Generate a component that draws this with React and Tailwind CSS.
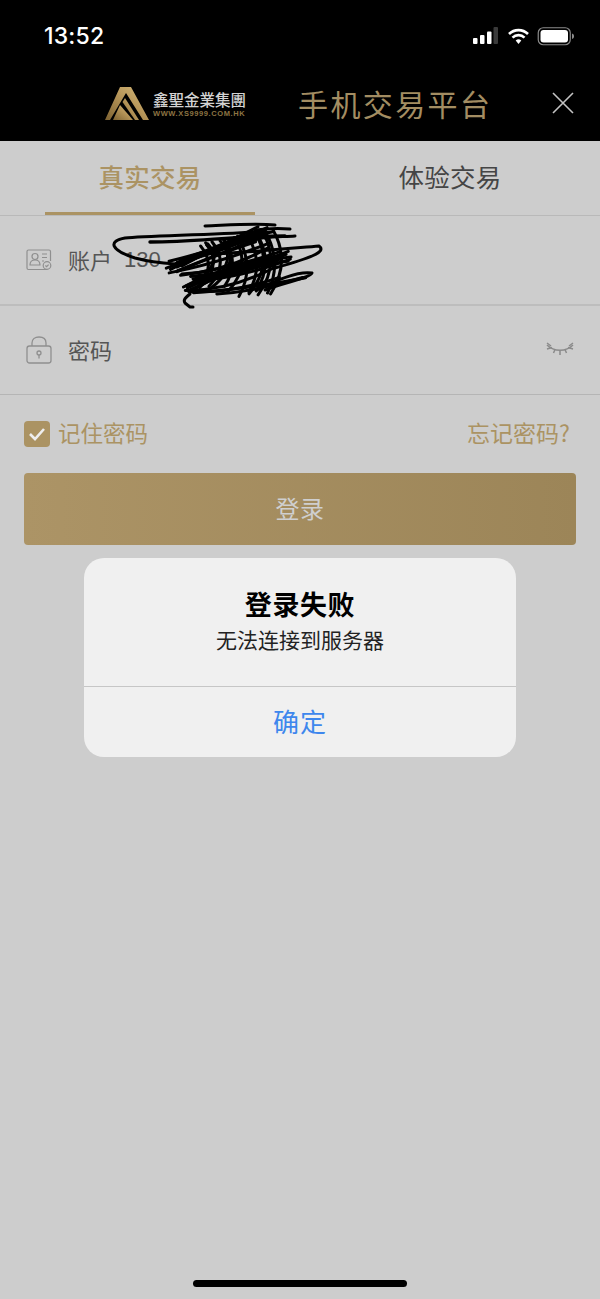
const cjk = { fontFamily: '"Noto Sans CJK SC", "Noto Sans", sans-serif' }

// dense pen scrawl, rows of uneven strokes across the blob
const wobble = (n) => Math.sin(n * 12.9898) * 43758.5453 % 1
const scrawl = []
for (let i = 0; i < 30; i++) {
  const t = i / 29
  const x0 = 62 + 36 * t + wobble(i + 1) * 14
  const y0 = 42 + 34 * t
  const x1 = 152 + 34 * t + wobble(i + 2) * 16
  const y1 = 6 + 52 * t + wobble(i + 3) * 5
  const bend = wobble(i + 4) * 12
  scrawl.push(`M${x0} ${y0} Q${(x0 + x1) / 2} ${(y0 + y1) / 2 + bend} ${x1} ${y1}`)
}
for (let i = 0; i < 16; i++) {
  const t = i / 15
  const x0 = 92 + 70 * t + wobble(i + 5) * 8
  const y0 = 28 - 16 * t
  const x1 = 84 + 76 * t + wobble(i + 6) * 10
  const y1 = 70 + wobble(i + 7) * 9
  scrawl.push(`M${x0} ${y0} Q${x0 + 18} ${(y0 + y1) / 2} ${x1} ${y1}`)
}

function StatusIcons() {
  return (
    <div className="flex items-center">
      <svg width="25" height="18" viewBox="0 0 25 18">
        <rect x="0" y="11" width="4.5" height="6" rx="1" fill="#fff" />
        <rect x="7" y="8" width="4.5" height="9" rx="1" fill="#fff" />
        <rect x="14" y="4.5" width="4.5" height="12.5" rx="1" fill="#fff" />
        <rect x="20.5" y="0" width="4.5" height="17" rx="1" fill="#3a3a3a" />
      </svg>
      <svg width="23" height="17" viewBox="0 0 22 17" className="ml-[9px]">
        <path d="M1.5 6 A13.5 13.5 0 0 1 20.5 6" fill="none" stroke="#fff" strokeWidth="2.6" />
        <path d="M5 9.6 A8.5 8.5 0 0 1 17 9.6" fill="none" stroke="#fff" strokeWidth="2.6" />
        <path d="M8.2 12.6 A4 4 0 0 1 13.8 12.6 L11 16 Z" fill="#fff" />
      </svg>
      <svg width="38" height="19" viewBox="0 0 37 19" className="ml-[7px]">
        <rect x="0.75" y="0.75" width="32" height="17" rx="5" fill="none" stroke="#8a8a8a" strokeWidth="1.2" />
        <rect x="3" y="3" width="27.5" height="12.5" rx="3" fill="#fff" />
        <path d="M34.5 6.5 C36 7 36.5 8 36.5 9.25 C36.5 10.5 36 11.5 34.5 12 Z" fill="#8a8a8a" />
      </svg>
    </div>
  )
}

function Logo() {
  return (
    <svg width="44" height="33" viewBox="0 0 44 33" className="shrink-0">
      <defs>
        <linearGradient id="logoGold" x1="0" y1="1" x2="1" y2="0">
          <stop offset="0" stopColor="#7d6231" />
          <stop offset="0.55" stopColor="#b8975a" />
          <stop offset="1" stopColor="#d6bb7c" />
        </linearGradient>
      </defs>
      <path d="M15 0 H26 L44 33 H38 L21 6 L5 33 H0 Z" fill="url(#logoGold)" />
      <path d="M20 11 L34 33 H30 L17.5 15 Z" fill="url(#logoGold)" />
      <path d="M15 18 L28 33 H8 Z" fill="url(#logoGold)" />
    </svg>
  )
}

function Scribble() {
  return (
    <svg
      width="240"
      height="100"
      viewBox="0 0 240 100"
      className="absolute left-[105px] top-[218px]"
      fill="none"
      stroke="#000"
      strokeWidth="3"
      strokeLinecap="round"
      strokeLinejoin="round"
    >
      <path d="M150 14 C100 17 40 18 20 20 C3 23 5 32 30 40 C45 44 55 45 70 46" />
      <path d="M45 24 C90 24 130 18 180 18" strokeWidth="3.4" />
      <path d="M110 36 C150 34 190 30 214 28 C222 34 205 40 170 50" />
      <path d="M100 8 C125 7 150 5 170 7 M150 12 C165 10 175 10 185 11 M160 20 C170 18 180 19 190 18" />
      <path d="M160 72 C180 64 205 60 207 55 C195 53 175 60 152 72" />
      <path d="M85 76 C80 80 78 82 80 85 L85 89 L88 89" />
      {scrawl.map((d, i) => (
        <path key={i} d={d} />
      ))}
    </svg>
  )
}

export default function App() {
  return (
    <div className="relative w-[600px] h-[1299px] overflow-hidden bg-[#cdcdcd]" style={cjk}>
      {/* top bar */}
      <div className="h-[141px] bg-black flex flex-col">
        <div className="h-[72px] pl-[44px] pr-[25px] flex items-center justify-between">
          <span className="text-white text-[23px] font-medium font-['Inter'] tracking-[0.2px]">13:52</span>
          <StatusIcons />
        </div>
        <div className="relative flex items-center pl-[105px] h-[62px]">
          <Logo />
          <div className="ml-[4px] flex flex-col w-[94px]">
            <span className="text-[#d3d3d3] text-[15.5px] leading-[20px] font-medium whitespace-nowrap">鑫聖金業集團</span>
            <span className="text-[#8d7443] text-[7.5px] leading-[9px] font-['Liberation_Sans'] font-bold tracking-[0.6px] whitespace-nowrap">WWW.XS9999.COM.HK</span>
          </div>
          <span className="ml-[51px] text-[#a38d62] text-[30px] leading-none tracking-[2.4px] whitespace-nowrap">手机交易平台</span>
          <svg width="24" height="24" viewBox="0 0 24 24" className="ml-[59px] shrink-0" stroke="#c4c4c4" strokeWidth="1.6" fill="none">
            <path d="M2 2 L22 22 M22 2 L2 22" />
          </svg>
        </div>
      </div>

      {/* tabs */}
      <div className="flex h-[75px] border-b border-[#b9b9b9]">
        <div className="w-[300px] flex justify-center">
          <div className="w-[210px] h-[74px] flex items-center justify-center border-b-[3px] border-[#ab9363]">
            <span className="text-[#ab9363] text-[25.5px] font-medium tracking-[0.2px]">真实交易</span>
          </div>
        </div>
        <div className="w-[300px] flex items-center justify-center pb-[3px]">
          <span className="text-[#454545] text-[25.5px] tracking-[0.2px]">体验交易</span>
        </div>
      </div>

      {/* account */}
      <div className="h-[90px] flex items-center pl-[26px] border-b-2 border-[#bdbdbd]">
        <svg width="26" height="22" viewBox="0 0 26 22" fill="none" stroke="#8f8f8f" strokeWidth="1.2">
          <path d="M21 20.5 H2.5 A1.5 1.5 0 0 1 1 19 V2.5 A1.5 1.5 0 0 1 2.5 1 H23 A1.5 1.5 0 0 1 24.5 2.5 V12" />
          <circle cx="9" cy="7.5" r="3" />
          <path d="M4 16 C4 12 6 11 9 11 C12 11 14 12 14 16 Z" />
          <path d="M16 5 H21 M16 8.5 H21 M16 12 H18" />
          <circle cx="21" cy="16.5" r="3.8" />
          <path d="M19.4 16.5 L20.6 17.7 L22.6 15.6" />
        </svg>
        <span className="ml-[16px] mb-[2px] text-[#555] text-[22px] whitespace-nowrap">账户</span>
        <span className="ml-[12px] mb-[2px] text-[#555] text-[22px] font-['Liberation_Sans']">130</span>
      </div>

      {/* password */}
      <div className="h-[89px] flex items-center pl-[26px] pr-[26px] border-b border-[#b5b5b5]">
        <svg width="26" height="28" viewBox="0 0 26 28" fill="none" stroke="#8f8f8f" strokeWidth="1.3">
          <path d="M6 10 V7 C6 3 9 1 13 1 C17 1 20 3 20 7 V10" />
          <rect x="1" y="10" width="24" height="17" rx="2.5" />
          <circle cx="13" cy="17" r="2" />
          <path d="M13 19 V22.5" />
        </svg>
        <span className="ml-[16px] mb-[2px] text-[#555] text-[22px]">密码</span>
        <svg width="28" height="16" viewBox="0 0 28 16" className="ml-auto" fill="none" stroke="#8b8b8b" strokeWidth="1.5">
          <path d="M1 3 C8 10 20 10 27 3" />
          <path d="M1 1 L5 4 M1 7 L6 5.5 M9 7.5 L7.5 11 M14 8.5 V13 M19 7.5 L20.5 11 M22 5.5 L27 7 M23 4 L27 1" />
        </svg>
      </div>

      {/* remember row */}
      <div className="h-[78px] flex items-center justify-between pl-[24px] pr-[30px]">
        <div className="flex items-center">
          <div className="w-[26px] h-[26px] rounded-[4px] bg-[#ab9363] flex items-center justify-center">
            <svg width="18" height="14" viewBox="0 0 18 14" fill="none" stroke="#eee" strokeWidth="2.6">
              <path d="M2 7 L7 12 L16 2" />
            </svg>
          </div>
          <span className="ml-[8px] mb-[3px] text-[#ab9363] text-[22.5px]">记住密码</span>
        </div>
        <span className="mb-[3px] text-[#ab9363] text-[23px]">忘记密码?</span>
      </div>

      {/* login */}
      <div className="px-[24px]">
        <div className="h-[72px] rounded-[4px] bg-gradient-to-r from-[#ac9466] to-[#9c8558] flex items-center justify-center">
          <span className="mb-[2px] text-[#cfcfcf] text-[24px] tracking-[0.5px]">登录</span>
        </div>
      </div>

      <Scribble />

      {/* home indicator */}
      <div className="absolute left-[193px] top-[1280px] w-[214px] h-[7px] rounded-full bg-black" />

      {/* alert */}
      <div className="absolute left-[84px] top-[558px] w-[432px] h-[199px] rounded-[20px] bg-[#f0f0f0] flex flex-col">
        <div className="h-[129px] border-b border-[#c6c6c6] flex flex-col items-center pt-[28px]">
          <span className="text-black text-[27px] leading-[36px] font-bold tracking-[0.6px]">登录失败</span>
          <span className="text-[#222] text-[21px] leading-[30px] mt-[2px]">无法连接到服务器</span>
        </div>
        <div className="flex-1 flex items-center justify-center">
          <span className="mb-[4px] text-[#3e87ed] text-[26px] tracking-[1px]">确定</span>
        </div>
      </div>
    </div>
  )
}
